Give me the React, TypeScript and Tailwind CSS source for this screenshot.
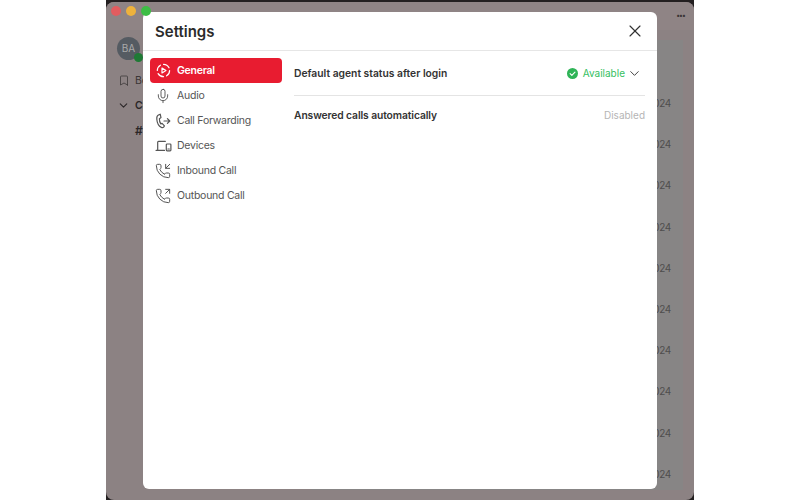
import React from 'react'
import { Bookmark, ChevronDown, Mic, PhoneIncoming, PhoneOutgoing, X } from 'lucide-react'

const IconGeneral = () => (
  <svg viewBox="0 0 16 16" fill="none" stroke="currentColor" strokeWidth="1.3" strokeLinecap="round" strokeLinejoin="round" className="w-[15px] h-[15px]">
    <path d="M8 1.4a6.6 6.6 0 0 1 5.9 3.7M14.500 8a6.600 6.600 0 0 1-3.200 5.700M8 14.600a6.600 6.600 0 0 1-5.700-3.300M1.400 8a6.600 6.600 0 0 1 3.300-5.700" />
    <path d="M6.400 5.400v5.200L10.600 8z" />
  </svg>
)

const IconForward = () => (
  <svg viewBox="0 0 16 16" fill="none" stroke="currentColor" strokeWidth="1.2" strokeLinecap="round" strokeLinejoin="round" className="w-[16px] h-[16px]">
    <path d="M5.200 1.200 3.400 2C2 2.700 1.600 4 1.800 6.200c.3 3.400 2 7 4.600 8.200 1 .4 1.900.1 2.400-.6l.6-.9-2.300-2.500-1.300.5C4.900 9.400 4.300 7.400 4.400 5.700l1.600-1.100z" />
    <path d="M9 8h5.600M12.400 5.600 14.800 8l-2.400 2.400" />
  </svg>
)

const IconDevices = () => (
  <svg viewBox="0 0 16 16" fill="none" stroke="currentColor" strokeWidth="1.2" strokeLinecap="round" strokeLinejoin="round" className="w-[17px] h-[16px]">
    <path d="M9.800 3.400H3a.8.8 0 0 0-.8.8v7.400M0.600 12.400h8.400" />
    <rect x="10.800" y="6" width="4.600" height="6.800" rx=".8" />
    <path d="M12.400 11h1.400" />
  </svg>
)

const menu = [
  { label: 'General', icon: <IconGeneral />, active: true },
  { label: 'Audio', icon: <Mic className="w-[16px] h-[16px]" strokeWidth={1.4} /> },
  { label: 'Call Forwarding', icon: <IconForward /> },
  { label: 'Devices', icon: <IconDevices /> },
  { label: 'Inbound Call', icon: <PhoneIncoming className="w-[16px] h-[16px]" strokeWidth={1.5} /> },
  { label: 'Outbound Call', icon: <PhoneOutgoing className="w-[16px] h-[16px]" strokeWidth={1.5} /> },
]

const App = () => {
  return (
    <div className="w-[800px] h-[500px] bg-white flex justify-center overflow-hidden font-['Inter',sans-serif]">
      <div className="w-[588px] h-full bg-[#231f20] pt-[2px]">
        <div className="relative w-full h-full rounded-[8px] bg-[#8c8283] flex flex-col overflow-hidden">
          {/* window behind the dialog */}
          <div className="h-[28px] shrink-0 bg-[#8f8485]" />
          <span className="absolute right-[9px] top-[10px] text-[7px] leading-none tracking-[-0.5px] font-bold text-[#3a3435]">•••</span>
          <div className="flex flex-1 min-h-0">
            <div className="w-[205px] shrink-0">
              <div className="relative ml-[11px] mt-[7px] w-[23px] h-[23px] rounded-full bg-[#555b62] flex items-center justify-center text-[10px] text-[#aaa]">
                BA
                <span className="absolute right-[-3px] bottom-[-2px] w-[9px] h-[9px] rounded-full bg-[#1e7a35]" />
              </div>
            </div>
            <div className="flex-1 mt-[10px] mb-[10px] mr-[11px] bg-[#878585] flex flex-col items-end pt-[56px] pr-[12px] gap-[26.200px] text-[10px] leading-[15px] tracking-[-0.3px] text-[#4f4d4d]">
              {Array.from({ length: 10 }).map((_, i) => (
                <span key={i}>2024</span>
              ))}
            </div>
          </div>
          <div className="absolute left-[12px] top-[71px] flex items-center gap-[5px] text-[#3a3536] text-[10.500px]">
            <Bookmark className="w-[12px] h-[13px]" strokeWidth={1.5} />
            <span>Bo</span>
          </div>
          <div className="absolute left-[11px] top-[96px] flex items-center gap-[5px] text-[#2b2728] text-[10.500px] font-semibold">
            <ChevronDown className="w-[13px] h-[13px]" strokeWidth={2} />
            <span>Cl</span>
          </div>
          <div className="absolute left-[29px] top-[120px] text-[#2b2728] text-[12px] font-semibold">#</div>

          {/* settings dialog */}
          <div className="absolute left-[37px] top-[10px] w-[514px] h-[477px] bg-white rounded-[6px] flex flex-col">
            <div className="h-[39px] shrink-0 border-b border-[#e6e6e6] flex items-center justify-between pl-[12px] pr-[12px]">
              <span className="text-[15px] font-semibold text-[#2b2b2b] pt-[2px]">Settings</span>
              <X className="w-[20px] h-[20px] text-[#333]" strokeWidth={1.4} />
            </div>
            <div className="flex flex-1 min-h-0">
              <div className="w-[151px] shrink-0 pl-[7px] pt-[7px] flex flex-col">
                {menu.map(item => (
                  <div
                    key={item.label}
                    className={
                      item.active
                        ? 'h-[25px] w-[132px] flex items-center rounded-[4px] bg-[#e81c30] text-white font-semibold'
                        : 'h-[25px] w-[132px] flex items-center text-[#555]'
                    }
                  >
                    <span className="w-[27px] flex justify-center pr-[1px]">{item.icon}</span>
                    <span className="text-[10.500px] tracking-[-0.25px]">{item.label}</span>
                  </div>
                ))}
              </div>
              <div className="flex-1 pr-[12px] flex flex-col text-[10.300px]">
                <div className="h-[45px] border-b border-[#e4e4e4] flex items-center justify-between">
                  <span className="font-semibold text-[#333] pt-[1px]">Default agent status after login</span>
                  <div className="flex items-center pr-[3px]">
                    <svg viewBox="0 0 12 12" className="w-[11px] h-[11px] mr-[5px]">
                      <circle cx="6" cy="6" r="6" fill="#2fb457" />
                      <path d="M3.400 6.200 5.300 8 8.700 4.400" fill="none" stroke="white" strokeWidth="1.200" strokeLinecap="round" strokeLinejoin="round" />
                    </svg>
                    <span className="text-[#35c05f] text-[10px]">Available</span>
                    <ChevronDown className="w-[15px] h-[15px] ml-[2px] text-[#444]" strokeWidth={1.6} />
                  </div>
                </div>
                <div className="h-[38px] flex items-center justify-between">
                  <span className="font-semibold text-[#333] pt-[1px] tracking-[-0.1px]">Answered calls automatically</span>
                  <span className="text-[#b5b5b5] text-[10px]">Disabled</span>
                </div>
              </div>
            </div>
          </div>

          {/* traffic lights sit on top of the dialog */}
          <div className="absolute left-[5px] top-[4px] flex gap-[5px]">
            <div className="w-[10px] h-[10px] rounded-full bg-[#e25c5f]" />
            <div className="w-[10px] h-[10px] rounded-full bg-[#eeb23c]" />
            <div className="w-[10px] h-[10px] rounded-full bg-[#3dbd45]" />
          </div>
        </div>
      </div>
    </div>
  )
}

export default App
